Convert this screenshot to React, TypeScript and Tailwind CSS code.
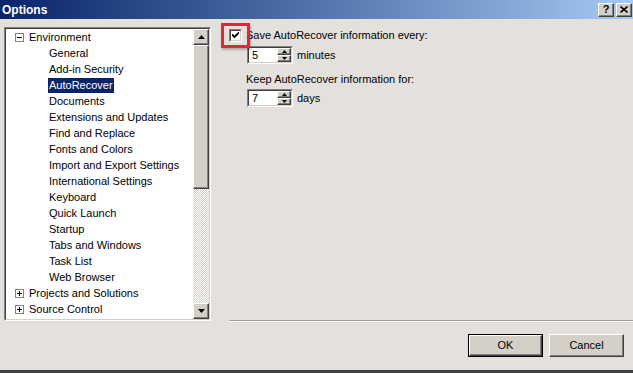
import React from 'react';

const children = [
  'General',
  'Add-in Security',
  'AutoRecover',
  'Documents',
  'Extensions and Updates',
  'Find and Replace',
  'Fonts and Colors',
  'Import and Export Settings',
  'International Settings',
  'Keyboard',
  'Quick Launch',
  'Startup',
  'Tabs and Windows',
  'Task List',
  'Web Browser',
];

function Expander({ open }: { open: boolean }) {
  return (
    <div className="relative w-[9px] h-[9px] border border-[#808080] bg-white shrink-0">
      <div className="absolute left-[1px] top-[3px] w-[5px] h-[1px] bg-black" />
      {!open && <div className="absolute left-[3px] top-[1px] w-[1px] h-[5px] bg-black" />}
    </div>
  );
}

function Arrow({ up, size = 'big' }: { up: boolean; size?: 'big' | 'small' }) {
  const w = size === 'big' ? 7 : 5;
  const h = size === 'big' ? 4 : 3;
  return (
    <svg width={w} height={h} viewBox={`0 0 ${w} ${h}`}>
      <polygon
        points={up ? `0,${h} ${w / 2},0 ${w},${h}` : `0,0 ${w},0 ${w / 2},${h}`}
        fill="#000"
      />
    </svg>
  );
}

// raised 3d box, classic windows look
const raised =
  'border border-t-white border-l-white border-r-[#404040] border-b-[#404040] bg-[#d4d0c8] shadow-[inset_-1px_-1px_0_#808080,inset_1px_1px_0_#d4d0c8]';

function SpinBox({ value, unit }: { value: string; unit: string }) {
  return (
    <div className="flex items-center">
      <div className="flex h-[18px] w-[46px] border border-t-[#808080] border-l-[#808080] border-r-white border-b-white">
        <div className="flex flex-1 border border-t-[#404040] border-l-[#404040] border-r-[#d4d0c8] border-b-[#d4d0c8] bg-white">
          <span className="flex-1 pl-[3px] leading-[14px]">{value}</span>
          <div className="flex flex-col w-[14px]">
            <div className={`flex-1 flex items-center justify-center ${raised}`}>
              <Arrow up size="small" />
            </div>
            <div className={`flex-1 flex items-center justify-center ${raised}`}>
              <Arrow up={false} size="small" />
            </div>
          </div>
        </div>
      </div>
      <span className="ml-[4px]">{unit}</span>
    </div>
  );
}

export default function App() {
  return (
    <div
      className="w-[633px] h-[373px] overflow-hidden flex flex-col bg-[#e4e1dc] text-[11px] text-black"
      style={{ fontFamily: '"Liberation Sans", Arial, sans-serif' }}
    >
      {/* Title bar */}
      <div className="h-[19px] shrink-0 flex items-center bg-gradient-to-r from-[#0a246a] to-[#a6caf0] pl-[2px] pr-[1px]">
        <span className="flex-1 text-white font-bold text-[12px]">Options</span>
        <div className={`w-[16px] h-[14px] flex items-center justify-center font-bold text-[11px] ${raised}`}>?</div>
        <div className={`ml-[2px] w-[16px] h-[14px] flex items-center justify-center ${raised}`}>
          <svg width="8" height="7" viewBox="0 0 8 7">
            <path d="M0.5 0.5L7.5 6.5M7.5 0.5L0.5 6.5" stroke="#000" strokeWidth="1.6" />
          </svg>
        </div>
      </div>

      {/* Body */}
      <div className="flex pt-[8px]">
        {/* Tree */}
        <div className="ml-[4px] w-[207px] h-[294px] border border-t-[#808080] border-l-[#808080] border-r-white border-b-white">
          <div className="flex h-full border border-t-[#404040] border-l-[#404040] border-r-[#d4d0c8] border-b-[#d4d0c8] bg-white">
            <div className="flex-1 overflow-hidden">
              <div className="flex items-center h-[16px] pl-[9px]">
                <Expander open />
                <span className="ml-[5px]">Environment</span>
              </div>
              {children.map((c) => (
                <div key={c} className="flex items-center h-[16px] pl-[42px]">
                  <span
                    className={`px-[1px] leading-[15px] ${
                      c === 'AutoRecover' ? 'bg-[#0a246a] text-white' : ''
                    }`}
                  >
                    {c}
                  </span>
                </div>
              ))}
              <div className="flex items-center h-[16px] pl-[9px]">
                <Expander open={false} />
                <span className="ml-[5px]">Projects and Solutions</span>
              </div>
              <div className="flex items-center h-[16px] pl-[9px]">
                <Expander open={false} />
                <span className="ml-[5px]">Source Control</span>
              </div>
            </div>
            {/* Scrollbar */}
            <div className="w-[16px] flex flex-col">
              <div className={`h-[16px] flex items-center justify-center ${raised}`}>
                <Arrow up />
              </div>
              <div className={`h-[144px] ${raised}`} />
              <div className="flex-1 bg-[repeating-conic-gradient(#d4d0c8_0_25%,#ffffff_0_50%)] bg-[length:2px_2px]" />
              <div className={`h-[16px] flex items-center justify-center ${raised}`}>
                <Arrow up={false} />
              </div>
            </div>
          </div>
        </div>

        {/* Right panel */}
        <div className="flex-1 ml-[18px] h-[294px] border-b border-b-[#a0a0a0] shadow-[0_1px_0_#ffffff] pt-[1px]">
          <div className="relative flex items-center h-[13px] mt-[1px]">
            <div className="w-[13px] h-[13px] border border-t-[#808080] border-l-[#808080] border-r-white border-b-white">
              <div className="w-full h-full border border-t-[#404040] border-l-[#404040] border-r-[#d4d0c8] border-b-[#d4d0c8] bg-white flex items-center justify-center">
                <svg width="7" height="7" viewBox="0 0 7 7">
                  <path d="M0 2.5L2.5 5L7 0.5" stroke="#000" strokeWidth="1.8" fill="none" />
                </svg>
              </div>
            </div>
            <span className="ml-[4px]">Save AutoRecover information every:</span>
            {/* red highlight */}
            <div className="absolute left-[-8px] top-[-6px] w-[29px] h-[25px] border-[3px] border-[#e3243b] shadow-[1px_2px_2px_rgba(0,0,0,0.25)]" />
          </div>
          <div className="mt-[4px] ml-[18px]">
            <SpinBox value="5" unit="minutes" />
          </div>
          <div className="mt-[9px] ml-[17px] leading-[13px]">Keep AutoRecover information for:</div>
          <div className="mt-[3px] ml-[18px]">
            <SpinBox value="7" unit="days" />
          </div>
        </div>
      </div>

      {/* Footer */}
      <div className="flex justify-end gap-[6px] pr-[9px] mt-[13px]">
        <div className="w-[75px] h-[23px] border border-black">
          <div className={`w-full h-full flex items-center justify-center ${raised}`}>OK</div>
        </div>
        <div className={`w-[75px] h-[23px] flex items-center justify-center ${raised}`}>Cancel</div>
      </div>
      <div className="flex-1" />
      <div className="h-[3px] bg-[#404040] shrink-0" />
    </div>
  );
}
